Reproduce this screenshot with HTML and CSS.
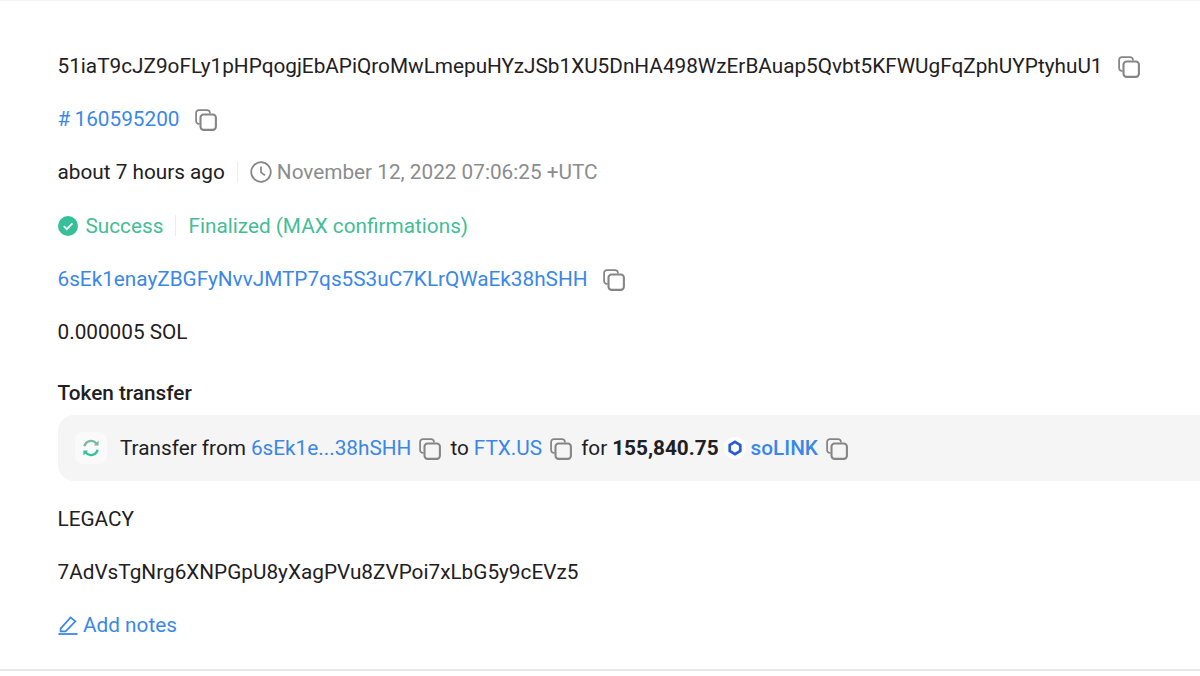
FILE: index.html
```html
<!DOCTYPE html>
<html lang="en">

<head>
  <meta charset="UTF-8" />
  <meta name="viewport" content="width=device-width, initial-scale=1.0" />
  <title>Transaction details</title>
  <link rel="stylesheet" href="styles.css">
</head>

<body>
  <svg class="defs" width="0" height="0">
    <symbol id="copy" viewBox="1 1 20 20">
      <path d="M5.2 14.6H4.6a2.6 2.6 0 0 1-2.6-2.6V4.6A2.6 2.6 0 0 1 4.6 2H12a2.6 2.6 0 0 1 2.6 2.6v.6" fill="none" stroke="currentColor" stroke-width="1.6" />
      <rect x="6" y="6" width="14" height="14" rx="2.8" fill="none" stroke="currentColor" stroke-width="1.9" />
    </symbol>
  </svg>

  <div class="container">
    <div class="row">
      <span>51iaT9cJZ9oFLy1pHPqogjEbAPiQroMwLmepuHYzJSb1XU5DnHA498WzErBAuap5Qvbt5KFWUgFqZphUYPtyhuU1</span>
      <svg class="copy copy-wide"><use href="#copy" /></svg>
    </div>

    <div class="row">
      <a class="link">#&#8201;160595200</a>
      <svg class="copy copy-wide"><use href="#copy" /></svg>
    </div>

    <div class="row">
      <span>about 7 hours ago</span>
      <span class="divider"></span>
      <svg class="clock" viewBox="0 0 22 22">
        <circle cx="11" cy="11" r="9.8" fill="none" stroke="currentColor" stroke-width="1.7" />
        <path d="M11 5.4V11.4L15 14.4" fill="none" stroke="currentColor" stroke-width="1.7" />
      </svg>
      <span class="muted">November 12, 2022 07:06:25 +UTC</span>
    </div>

    <div class="row success">
      <svg class="check" viewBox="0 0 20 20">
        <circle cx="10" cy="10" r="10" fill="#35c09a" />
        <path d="M5.8 10.2L8.8 13.2L14.4 7.4" fill="none" stroke="#fff" stroke-width="1.7" />
      </svg>
      <span>Success</span>
      <span class="divider"></span>
      <span>Finalized (MAX confirmations)</span>
    </div>

    <div class="row">
      <a class="link">6sEk1enayZBGFyNvvJMTP7qs5S3uC7KLrQWaEk38hSHH</a>
      <svg class="copy copy-wide"><use href="#copy" /></svg>
    </div>

    <div class="row">
      <span>0.000005 SOL</span>
    </div>

    <div class="token-title">Token transfer</div>

    <div class="transfer">
      <span class="transfer-icon">
        <svg viewBox="0 0 20 20" width="20" height="20">
          <path d="M3.4 8.2A6.9 6.9 0 0 1 15.4 5.4" fill="none" stroke="#7cb9a5" stroke-width="2.4" />
          <path d="M17.6 2.6V7.6H12.8Z" fill="#7cb9a5" />
          <path d="M16.6 11.8A6.9 6.9 0 0 1 4.6 14.6" fill="none" stroke="#35c09a" stroke-width="2.4" />
          <path d="M2.4 17.4V12.4H7.2Z" fill="#35c09a" />
        </svg>
      </span>
      <span class="transfer-text">Transfer from</span>
      <a class="link">6sEk1e...38hSHH</a>
      <svg class="copy"><use href="#copy" /></svg>
      <span class="transfer-text word">to</span>
      <a class="link">FTX.US</a>
      <svg class="copy"><use href="#copy" /></svg>
      <span class="transfer-text word">for</span>
      <strong class="amount">155,840.75</strong>
      <span class="token-logo">
        <svg viewBox="0 0 16 16" width="18" height="18">
          <path d="M8 2.6L12.7 5.3V10.7L8 13.4L3.3 10.7V5.3Z" fill="none" stroke="#2a5ada" stroke-width="2.4" />
        </svg>
      </span>
      <a class="link token-name">soLINK</a>
      <svg class="copy"><use href="#copy" /></svg>
    </div>

    <div class="row">
      <span>LEGACY</span>
    </div>

    <div class="row">
      <span>7AdVsTgNrg6XNPGpU8yXagPVu8ZVPoi7xLbG5y9cEVz5</span>
    </div>

    <div class="row">
      <svg class="pen" viewBox="0 0 20 20">
        <path d="M2.6 13.6L12.6 2.4L17.4 6.4L7.6 16.4H2.6Z" fill="none" stroke="currentColor" stroke-width="1.7" />
        <path d="M0.4 19H19.6" fill="none" stroke="currentColor" stroke-width="1.8" />
      </svg>
      <a class="link">Add notes</a>
    </div>
  </div>
</body>

</html>
```

FILE: styles.css
```css
* {
  box-sizing: border-box;
}

body {
  margin: 0;
  height: 676px;
  overflow: hidden;
  font-family: 'Roboto', sans-serif;
  font-size: 20.75px;
  color: #1e2022;
  background-color: #ffffff;
}

.defs {
  position: absolute;
}

.container {
  height: 671px;
  padding: 38px 0 0 57.5px;
  border-top: 1px solid #f3f3f3;
  border-bottom: 2px solid #e9e9e9;
}

.row {
  display: flex;
  align-items: center;
  height: 53.33px;
  white-space: nowrap;
}

.link {
  color: #3a87e8;
}

.muted {
  color: #8a8c8e;
}

.success {
  color: #44bd96;
}

.divider {
  width: 1px;
  height: 21px;
  margin: 0 12px;
  background-color: #ececec;
}

.copy {
  flex: none;
  width: 22px;
  height: 22px;
  margin: 2px 0 0 8px;
  color: #858585;
}

.copy-wide {
  margin-left: 15.5px;
}

.clock {
  width: 22px;
  height: 22px;
  margin-right: 5px;
  color: #858585;
}

.check {
  width: 20px;
  height: 20px;
  margin-right: 8px;
}

.pen {
  width: 20px;
  height: 20px;
  margin-right: 5.5px;
  color: #3a87e8;
}

.token-title {
  display: flex;
  align-items: center;
  height: 40px;
  margin-top: 14px;
  font-weight: 500;
}

.transfer {
  display: flex;
  align-items: center;
  height: 66px;
  margin: 2px 0 11px;
  padding: 1px 0 0 17.5px;
  border-radius: 16px 0 0 16px;
  background-color: #f5f5f5;
  white-space: nowrap;
}

.transfer-icon {
  display: flex;
  align-items: center;
  justify-content: center;
  width: 32px;
  height: 32px;
  margin-right: 13px;
  border-radius: 8px;
  background-color: #fafafa;
}

.transfer-text {
  margin-right: 5px;
}

.word {
  margin-left: 9px;
}

.amount {
  font-weight: 700;
}

.token-logo {
  display: flex;
  align-items: center;
  justify-content: center;
  width: 22px;
  height: 22px;
  margin: 0 5px;
  border-radius: 50%;
  background-color: #ffffff;
}

.token-name {
  font-weight: 500;
}
```
